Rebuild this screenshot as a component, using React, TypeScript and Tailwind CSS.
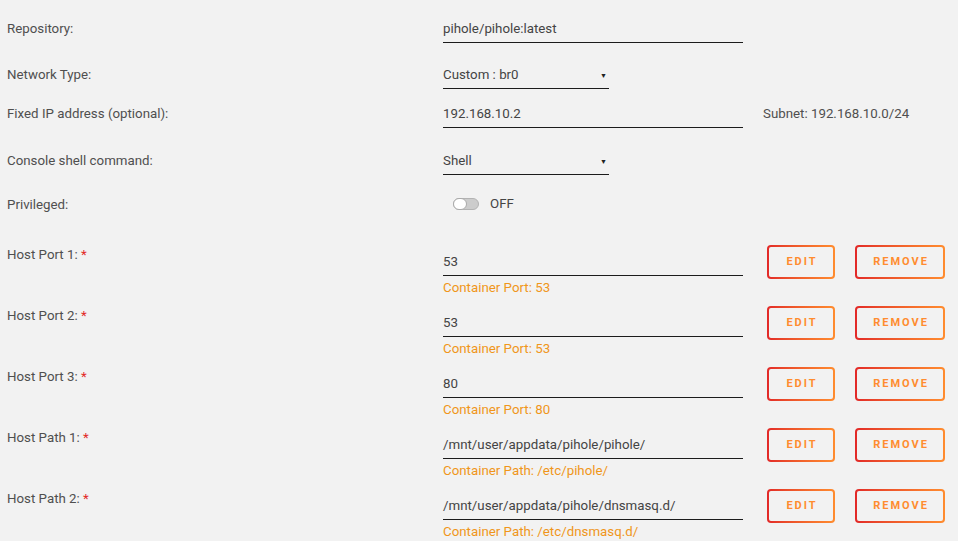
import React from "react";

type PortRow = {
  label: string;
  value: string;
  hint: string;
};

const rows: PortRow[] = [
  { label: "Host Port 1:", value: "53", hint: "Container Port: 53" },
  { label: "Host Port 2:", value: "53", hint: "Container Port: 53" },
  { label: "Host Port 3:", value: "80", hint: "Container Port: 80" },
  { label: "Host Path 1:", value: "/mnt/user/appdata/pihole/pihole/", hint: "Container Path: /etc/pihole/" },
  { label: "Host Path 2:", value: "/mnt/user/appdata/pihole/dnsmasq.d/", hint: "Container Path: /etc/dnsmasq.d/" },
];

function TextInput({ value }: { value: string }) {
  return (
    <div className="h-[29px] w-[300px] pt-[1px] leading-[27px] border-b border-[#1c1c1c] text-[13.3px] text-[#444]">
      {value}
    </div>
  );
}

function Select({ value }: { value: string }) {
  return (
    <div className="h-[29px] w-[166px] pt-[2px] flex items-center justify-between border-b border-[#1c1c1c] text-[13.3px] text-[#444]">
      <span>{value}</span>
      <span className="text-[7px] text-[#222] pr-[2px] pt-[2px]">▼</span>
    </div>
  );
}

function OutlineButton({ text, width }: { text: string; width: string }) {
  return (
    <div className={`${width} h-[34px] rounded-[4px] p-[2px] bg-gradient-to-r from-[#e22828] to-[#ff8c2f]`}>
      <div className="h-full w-full rounded-[2px] bg-[#f2f2f2] flex items-center justify-center text-[11px] font-bold tracking-[2px] text-[#ff8c2f] pl-[2px]">
        {text}
      </div>
    </div>
  );
}

function Label({ children }: { children: React.ReactNode }) {
  return <div className="w-[443px] shrink-0 pl-[7px] pt-[1px] text-[13.3px] text-[#4f4f4f]">{children}</div>;
}

export default function App() {
  return (
    <div
      className="w-[958px] h-[541px] overflow-hidden bg-[#f2f2f2] pt-[14px]"
      style={{ fontFamily: "Roboto, 'Liberation Sans', sans-serif" }}
    >
      <div className="flex items-center">
        <Label>Repository:</Label>
        <TextInput value="pihole/pihole:latest" />
      </div>

      <div className="flex items-center mt-[17px]">
        <Label>Network Type:</Label>
        <Select value="Custom : br0" />
      </div>

      <div className="flex items-center mt-[10px]">
        <Label>Fixed IP address (optional):</Label>
        <TextInput value="192.168.10.2" />
        <div className="ml-[20px] pt-[1px] text-[13.3px] text-[#4f4f4f]">Subnet: 192.168.10.0/24</div>
      </div>

      <div className="flex items-center mt-[18px]">
        <Label>Console shell command:</Label>
        <Select value="Shell" />
      </div>

      <div className="flex items-center h-[28px] mt-[15px]">
        <Label>Privileged:</Label>
        <div className="flex items-center pl-[10px]">
          <div className="relative w-[26px] h-[12px] rounded-full bg-[#ccc] border border-[#b3b3b3]">
            <div className="absolute left-[-1px] top-[-1px] w-[14px] h-[12px] rounded-full bg-white border border-[#aaa]" />
          </div>
          <span className="ml-[11px] text-[13.3px] text-[#444]">OFF</span>
        </div>
      </div>

      <div className="mt-[29px] flex flex-col">
        {rows.map((r) => (
          <div key={r.label} className="flex h-[61px]">
            <Label>
              <div className="leading-[13px]">
                {r.label} <span className="text-[#e22828]">*</span>
              </div>
            </Label>
            <div className="flex flex-col">
              <TextInput value={r.value} />
              <div className="mt-[4px] leading-[16px] text-[13.3px] text-[#f0961a]">{r.hint}</div>
            </div>
            <div className="flex gap-[20px] ml-[24px] -mt-[2px]">
              <OutlineButton text="EDIT" width="w-[68px]" />
              <OutlineButton text="REMOVE" width="w-[90px]" />
            </div>
          </div>
        ))}
      </div>
    </div>
  );
}
